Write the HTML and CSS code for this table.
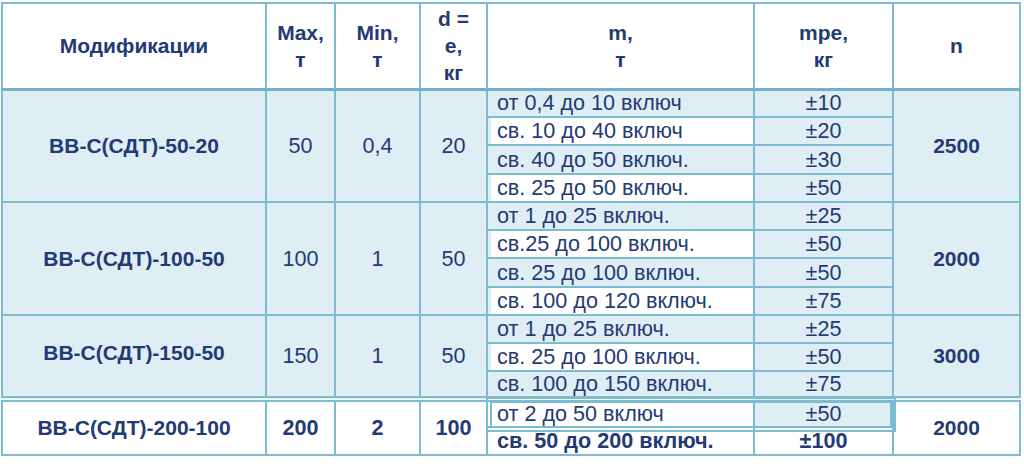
FILE: index.html
```html
<!DOCTYPE html>
<html lang="ru">
<head>
<meta charset="utf-8">
<title>Модификации</title>
<link rel="stylesheet" href="styles.css">
</head>
<body>
<div class="wrap">
<table class="spec">
<colgroup>
<col class="c-model"><col class="c-max"><col class="c-min"><col class="c-d"><col class="c-m"><col class="c-e"><col class="c-n">
</colgroup>
<thead>
<tr class="head">
<th>Модификации</th><th>Max,<br>т</th><th>Min,<br>т</th><th>d =<br>e,<br>кг</th><th>m,<br>т</th><th>mpe,<br>кг</th><th>n</th>
</tr>
</thead>
<tbody class="grp">
<tr class="h28"><td rowspan="4" class="model">ВВ-С(СДТ)-50-20</td><td rowspan="4">50</td><td rowspan="4">0,4</td><td rowspan="4">20</td><td class="m">от 0,4 до 10 включ</td><td>±10</td><td rowspan="4" class="n">2500</td></tr>
<tr class="h28"><td class="m white">св. 10 до 40 включ</td><td>±20</td></tr>
<tr class="h29"><td class="m">св. 40 до 50 включ.</td><td>±30</td></tr>
<tr class="h28"><td class="m white">св. 25 до 50 включ.</td><td>±50</td></tr>
</tbody>
<tbody class="grp">
<tr class="h28"><td rowspan="4" class="model">ВВ-С(СДТ)-100-50</td><td rowspan="4">100</td><td rowspan="4">1</td><td rowspan="4">50</td><td class="m">от 1 до 25 включ.</td><td>±25</td><td rowspan="4" class="n">2000</td></tr>
<tr class="h28"><td class="m white">св.25 до 100 включ.</td><td>±50</td></tr>
<tr class="h29"><td class="m">св. 25 до 100 включ.</td><td>±50</td></tr>
<tr class="h28"><td class="m white">св. 100 до 120 включ.</td><td>±75</td></tr>
</tbody>
<tbody class="grp">
<tr class="h28"><td rowspan="3" class="model up">ВВ-С(СДТ)-150-50</td><td rowspan="3">150</td><td rowspan="3">1</td><td rowspan="3">50</td><td class="m">от 1 до 25 включ.</td><td>±25</td><td rowspan="3" class="n">3000</td></tr>
<tr class="h28"><td class="m white">св. 25 до 100 включ.</td><td>±50</td></tr>
<tr class="h28"><td class="m">св. 100 до 150 включ.</td><td>±75</td></tr>
</tbody>
<tbody class="last">
<tr class="h28 first"><td rowspan="2" class="model">ВВ-С(СДТ)-200-100</td><td rowspan="2">200</td><td rowspan="2">2</td><td rowspan="2">100</td><td class="m plain">от 2 до 50 включ</td><td class="tint">±50</td><td rowspan="2" class="n">2000</td></tr>
<tr class="h28"><td class="m">св. 50 до 200 включ.</td><td>±100</td></tr>
</tbody>
</table>
<div class="sel"></div>
</div>
</body>
</html>
```
FILE: styles.css
```css
html, body {
  margin: 0;
  padding: 0;
  background: #ffffff;
}
.wrap {
  position: relative;
  width: 1024px;
  height: 469px;
  padding: 2px 0 0 1px;
  box-sizing: border-box;
}
.spec {
  border-collapse: collapse;
  table-layout: fixed;
  width: 1018px;
  font-family: "Liberation Sans", Arial, sans-serif;
  font-size: 21.6px;
  color: #243a74;
}
.c-model { width: 264px; }
.c-max { width: 69px; }
.c-min { width: 85px; }
.c-d { width: 67px; }
.c-m { width: 267px; }
.c-e { width: 139px; }
.c-n { width: 127px; }
.spec th, .spec td {
  border: 2px solid #7dbbd1;
  padding: 0;
  text-align: center;
  vertical-align: middle;
  line-height: 24px;
}
.spec th {
  font-size: 21px;
  font-weight: bold;
  line-height: 27px;
  border-bottom: 3px solid #6fb2ca;
  background: #ffffff;
}
.head { height: 86px; }
.h28 { height: 28px; }
.h29 { height: 29px; }
.grp td {
  background: #dfeef5;
}
.grp td.white {
  background: #ffffff;
  box-shadow: inset 3px 0 0 #dfeef5;
}
.spec td.m {
  text-align: left;
  padding-left: 9px;
  white-space: nowrap;
}
.model, .n {
  font-weight: bold;
  font-size: 21px;
}
.model.up {
  padding-bottom: 6px;
}
.last td {
  background: #ffffff;
  font-weight: bold;
}
.last td.plain {
  font-weight: normal;
}
.last td.tint {
  background: #dfeef5;
  font-weight: normal;
}
.last tr.first td {
  border-top: 6px double #7dbbd1;
}
.sel {
  position: absolute;
  left: 486px;
  top: 397px;
  width: 410px;
  height: 35px;
  box-sizing: border-box;
  border: 6px double #7dbbd1;
  pointer-events: none;
}
```
